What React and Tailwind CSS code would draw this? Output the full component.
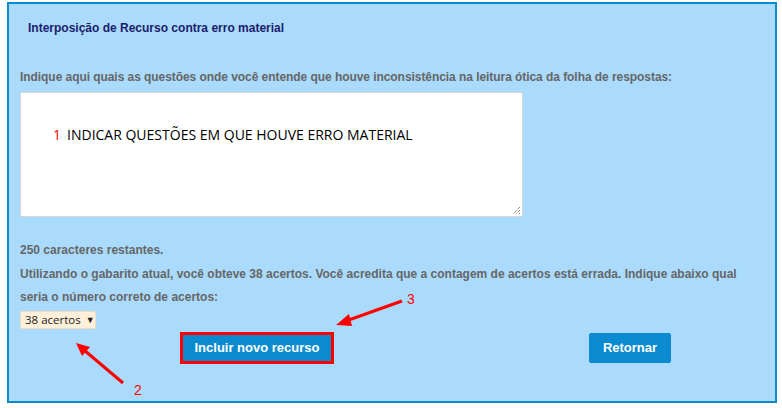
export default function App() {
  return (
    <div className="relative w-[782px] h-[408px] bg-white" style={{ fontFamily: '"Liberation Sans", Arial, sans-serif' }}>
      <div className="absolute left-[7px] top-[2px] w-[770px] h-[401px] border-2 border-[#0b8ad0] bg-[#aadbfd]">
        <div className="pl-[19px] pt-[16px] text-[12px] leading-[16px] text-[#1c1c6c] font-bold">
          Interposição de Recurso contra erro material
        </div>
        <div className="pl-[11px] pt-[33px] text-[12px] leading-[16px] font-bold text-[#666666] tracking-[-0.06px] whitespace-nowrap">
          Indique aqui quais as questões onde você entende que houve inconsistência na leitura ótica da folha de respostas:
        </div>
        <div className="ml-[11px] mt-[7px] w-[503px] h-[125px] bg-white border border-[#d8d8d8] rounded-[2px] relative">
          <div className="pl-[32px] pt-[33px] text-[14px] leading-[18px] text-black" style={{ fontFamily: '"Open Sans", sans-serif' }}>
            <span className="text-[#ff0000] mr-[6px]">1</span>INDICAR QUESTÕES EM QUE HOUVE ERRO MATERIAL
          </div>
          <svg className="absolute right-[1px] bottom-[1px]" width="9" height="9" viewBox="0 0 9 9">
            <path d="M8 1 L1 8 M8 4 L4 8 M8 7 L7 8" stroke="#555" strokeWidth="1" strokeDasharray="1 1" />
          </svg>
        </div>
        <div className="pl-[11px] pt-[25px] text-[12px] leading-[16px] font-bold text-[#666666]">
          250 caracteres restantes.
        </div>
        <div className="pl-[11px] pt-[5px] pr-[20px] text-[12px] leading-[23px] font-bold text-[#666666]">
          Utilizando o gabarito atual, você obteve 38 acertos. Você acredita que a contagem de acertos está errada. Indique abaixo qual seria o número correto de acertos:
        </div>
        <div className="ml-[11px] mt-[2px] w-[76px] h-[18px] bg-[#fdefd9] border border-[#f0dcc0] rounded-[2px] flex items-center pl-[4px] text-[11.5px] text-[#222] whitespace-nowrap" style={{ fontFamily: '"Open Sans", sans-serif' }}>
          38 acertos <span className="ml-[5px] text-[9px]">▼</span>
        </div>
        <div className="flex mt-[3px]">
          <div className="ml-[171px] w-[154px] h-[32px] border-[3px] border-[#ff0000] bg-[#0a8bd0] flex items-center justify-center text-white text-[13px] font-bold">
            Incluir novo recurso
          </div>
          <div className="ml-[255px] mt-[1px] w-[82px] h-[30px] rounded-[2px] bg-[#0a8bd0] flex items-center justify-center text-white text-[13px] font-bold">
            Retornar
          </div>
        </div>
      </div>
      <svg className="absolute left-0 top-0 pointer-events-none" width="782" height="408" viewBox="0 0 782 408">
        <line x1="402" y1="301" x2="346" y2="321" stroke="#ff0000" strokeWidth="3" />
        <polygon points="336,325 349,314 352,326" fill="#ff0000" />
        <line x1="123" y1="383" x2="84" y2="350" stroke="#ff0000" strokeWidth="3" />
        <polygon points="76,343 90,347 82,356" fill="#ff0000" />
        <text x="407" y="304" fill="#ff0000" fontSize="14" fontFamily="Liberation Sans, sans-serif">3</text>
        <text x="134" y="395" fill="#ff0000" fontSize="14" fontFamily="Liberation Sans, sans-serif">2</text>
      </svg>
    </div>
  );
}
